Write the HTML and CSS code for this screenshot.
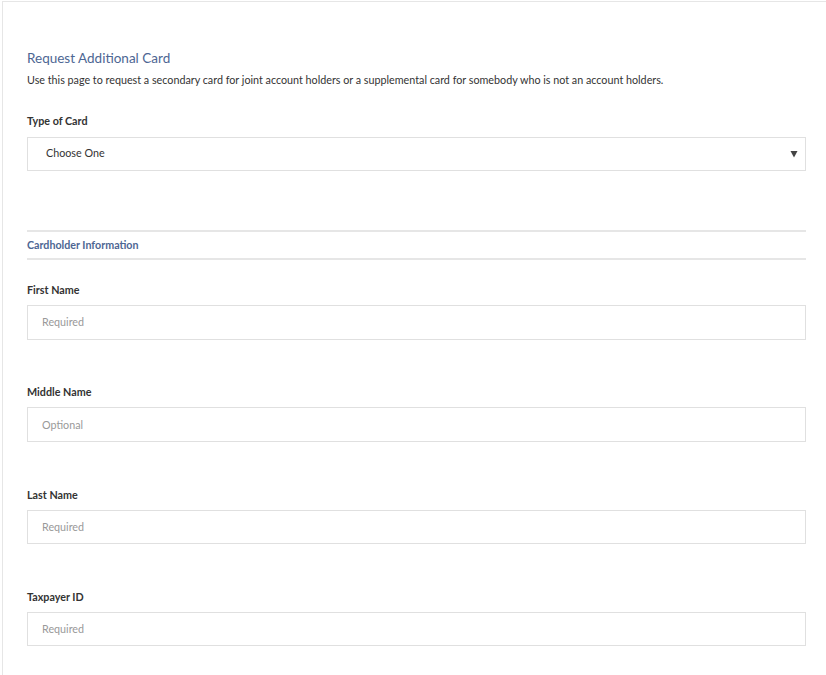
FILE: index.html
```html
<!DOCTYPE html>
<html lang="en">
<head>
<meta charset="utf-8">
<title>Request Additional Card</title>
<link rel="stylesheet" href="styles.css">
</head>
<body>
<div class="panel">
  <h1 class="title">Request Additional Card</h1>
  <p class="desc">Use this page to request a secondary card for joint account holders or a supplemental card for somebody who is not an account holders.</p>

  <div class="type-field">
    <label class="label">Type of Card</label>
    <div class="select">
      <span class="select-text">Choose One</span>
      <svg class="arrow" width="8" height="8" viewBox="0 0 8 8"><polygon points="0.5,1 7.5,1 4,7.5" fill="#444"/></svg>
    </div>
  </div>

  <div class="section-head">Cardholder Information</div>

  <div class="field">
    <label class="label">First Name</label>
    <input class="input" type="text" placeholder="Required">
  </div>
  <div class="field">
    <label class="label">Middle Name</label>
    <input class="input" type="text" placeholder="Optional">
  </div>
  <div class="field">
    <label class="label">Last Name</label>
    <input class="input" type="text" placeholder="Required">
  </div>
  <div class="field">
    <label class="label">Taxpayer ID</label>
    <input class="input" type="text" placeholder="Required">
  </div>
</div>
</body>
</html>
```

FILE: styles.css
```css
html, body {
  margin: 0;
  padding: 0;
  background: #fff;
}

body {
  font-family: Lato, "Open Sans", "Liberation Sans", sans-serif;
  color: #333;
  overflow: hidden;
}

.panel {
  margin: 1px 0 0 2px;
  border-top: 1px solid #e6e6e6;
  border-left: 1px solid #e6e6e6;
  padding: 48px 20px 40px 24px;
}

.title {
  margin: 0;
  font-size: 13.5px;
  font-weight: 400;
  line-height: 16px;
  color: #4d6693;
}

.desc {
  margin: 7px 0 0;
  font-size: 10.75px;
  line-height: 14px;
  color: #333;
}

.type-field {
  margin-top: 27px;
}

.label {
  display: block;
  font-size: 10.75px;
  font-weight: 700;
  line-height: 14px;
  color: #333;
  margin-bottom: 8px;
}

.type-field .label {
  margin-bottom: 9px;
}

.select {
  box-sizing: border-box;
  height: 34px;
  border: 1px solid #e0e0e0;
  display: flex;
  align-items: center;
  justify-content: space-between;
  padding: 0 7px 3px 18px;
}

.select-text {
  font-size: 10.75px;
  color: #333;
}

.arrow {
  display: block;
  margin-top: 2px;
}

.section-head {
  margin-top: 59px;
  border-top: 2px solid #e6e6e6;
  border-bottom: 2px solid #e6e6e6;
  height: 26px;
  line-height: 25px;
  font-size: 10.7px;
  font-weight: 700;
  color: #4d6693;
}

.field {
  margin-top: 23px;
}

.field + .field {
  margin-top: 45.8px;
}

.input {
  display: block;
  box-sizing: border-box;
  width: 100%;
  height: 34.5px;
  margin: 0;
  border: 1px solid #e0e0e0;
  border-radius: 0;
  padding: 0 14px 1px;
  font-family: inherit;
  font-size: 10.75px;
  color: #333;
  background: #fff;
  outline: none;
}

.input::placeholder {
  color: #999;
  opacity: 1;
}
```
